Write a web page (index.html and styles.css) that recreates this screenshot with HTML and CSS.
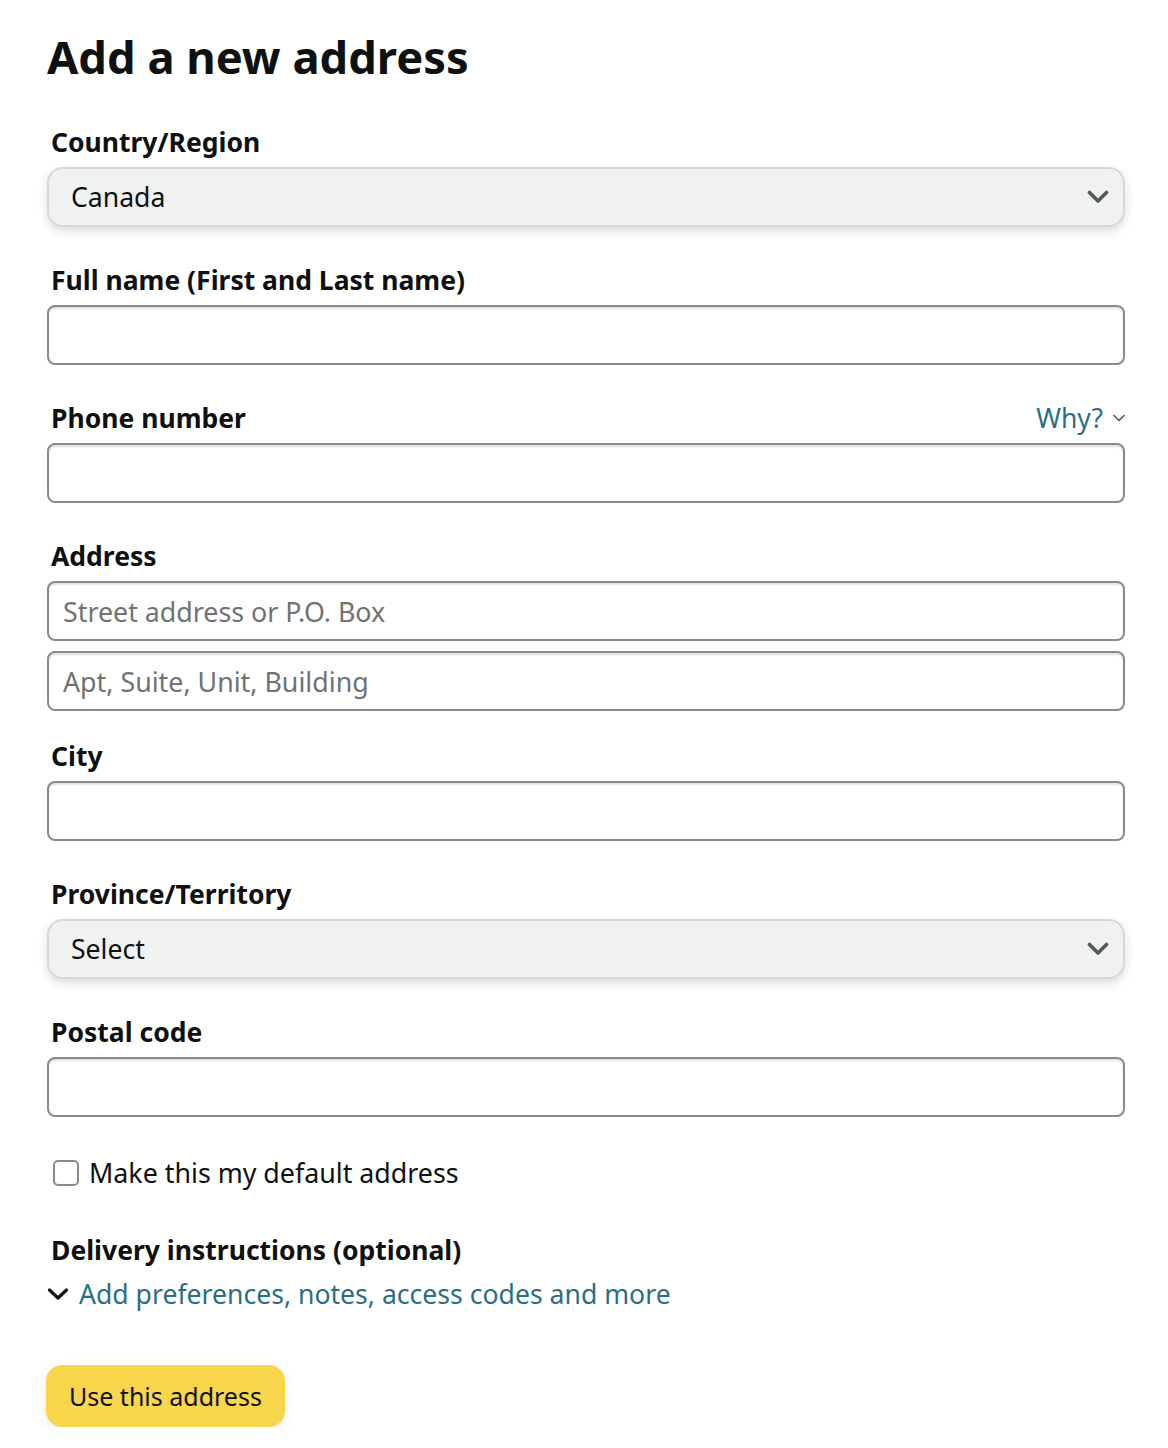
FILE: index.html
```html
<!DOCTYPE html>
<html lang="en">
<head>
<meta charset="utf-8">
<title>Add a new address</title>
<link rel="stylesheet" href="styles.css">
</head>
<body>
<main class="page">
  <h1 class="title">Add a new address</h1>
  <form class="form">
    <div class="field">
      <label class="label">Country/Region</label>
      <div class="select">
        <span>Canada</span>
        <svg class="select-chev" width="22" height="14" viewBox="0 0 22 14"><path d="M2.5 2.5 L11 11 L19.5 2.5" fill="none" stroke="#565959" stroke-width="3.6" stroke-linecap="round" stroke-linejoin="round"/></svg>
      </div>
    </div>
    <div class="field">
      <label class="label">Full name (First and Last name)</label>
      <input class="input" type="text">
    </div>
    <div class="field">
      <div class="label-row">
        <label class="label">Phone number</label>
        <span class="why">Why? <svg width="12" height="8" viewBox="0 0 12 8"><path d="M1 1.5 L6 6.5 L11 1.5" fill="none" stroke="#565959" stroke-width="1.6" stroke-linecap="round" stroke-linejoin="round"/></svg></span>
      </div>
      <input class="input" type="text">
    </div>
    <div class="field field-address">
      <label class="label">Address</label>
      <div class="stack">
        <input class="input" type="text" placeholder="Street address or P.O. Box">
        <input class="input" type="text" placeholder="Apt, Suite, Unit, Building">
      </div>
    </div>
    <div class="field">
      <label class="label">City</label>
      <input class="input" type="text">
    </div>
    <div class="field">
      <label class="label">Province/Territory</label>
      <div class="select">
        <span>Select</span>
        <svg class="select-chev" width="22" height="14" viewBox="0 0 22 14"><path d="M2.5 2.5 L11 11 L19.5 2.5" fill="none" stroke="#565959" stroke-width="3.6" stroke-linecap="round" stroke-linejoin="round"/></svg>
      </div>
    </div>
    <div class="field">
      <label class="label">Postal code</label>
      <input class="input" type="text">
    </div>
    <label class="check-row">
      <span class="checkbox"></span>
      <span>Make this my default address</span>
    </label>
    <div class="delivery">
      <div class="label">Delivery instructions (optional)</div>
      <div class="expander">
        <svg width="22" height="14" viewBox="0 0 22 14"><path d="M2.5 3 L11 11 L19.5 3" fill="none" stroke="#0f1111" stroke-width="3.2" stroke-linecap="round" stroke-linejoin="round"/></svg>
        <span class="link">Add preferences, notes, access codes and more</span>
      </div>
    </div>
    <button class="button" type="button">Use this address</button>
  </form>
</main>
</body>
</html>
```
FILE: styles.css
```css
* { box-sizing: border-box; }
body {
  margin: 0;
  background: #ffffff;
  font-family: "Noto Sans", "Liberation Sans", sans-serif;
  color: #0f1111;
}
.page {
  padding: 29px 0 0 47px;
  width: 1125px;
}
.title {
  margin: 0 0 38px 0;
  font-size: 45.3px;
  line-height: 56px;
  font-weight: 700;
}
.form {
  display: flex;
  flex-direction: column;
}
.field {
  display: flex;
  flex-direction: column;
  gap: 6px;
  margin-bottom: 34px;
}
.field-address {
  margin-bottom: 26px;
}
.label {
  display: block;
  font-size: 26.5px;
  line-height: 38px;
  font-weight: 700;
  padding-left: 4px;
}
.label-row {
  display: flex;
  justify-content: space-between;
  align-items: center;
}
.why {
  display: flex;
  align-items: center;
  gap: 10px;
  font-size: 26.6px;
  color: #2a6f83;
}
.select {
  height: 60px;
  border: 2px solid #d5d9d9;
  border-radius: 16px;
  background: #f0f2f2;
  box-shadow: 0 4px 10px rgba(15, 17, 17, 0.15);
  display: flex;
  align-items: center;
  justify-content: space-between;
  padding: 0 14px 0 22px;
  font-size: 26.6px;
}
.input {
  height: 60px;
  width: 100%;
  border: 2px solid #888c8c;
  border-radius: 8px;
  box-shadow: inset 0 2px 2px rgba(15, 17, 17, 0.12);
  padding: 0 14px;
  font-family: inherit;
  font-size: 26.8px;
  color: #0f1111;
  background: #fff;
}
.input::placeholder { color: #6f7373; }
.stack {
  display: flex;
  flex-direction: column;
  gap: 10px;
}
.check-row {
  display: flex;
  align-items: center;
  gap: 10px;
  padding-left: 6px;
  margin-top: 4px;
  font-size: 26.8px;
  line-height: 36px;
}
.checkbox {
  width: 26px;
  height: 26px;
  border: 2px solid #888c8c;
  border-radius: 5px;
  background: #fff;
}
.delivery {
  margin-top: 40px;
  display: flex;
  flex-direction: column;
  gap: 6px;
}
.expander {
  display: flex;
  align-items: center;
  gap: 10px;
}
.link {
  font-size: 26.6px;
  line-height: 38px;
  color: #2a6f83;
}
.button {
  margin-top: 52px;
  margin-left: -1px;
  align-self: flex-start;
  height: 62px;
  padding: 0 23px;
  border: none;
  border-radius: 16px;
  background: #f8d64b;
  box-shadow: 0 4px 10px rgba(213, 217, 217, 0.5);
  font-family: inherit;
  font-size: 25px;
  color: #0f1111;
  white-space: nowrap;
}
```
